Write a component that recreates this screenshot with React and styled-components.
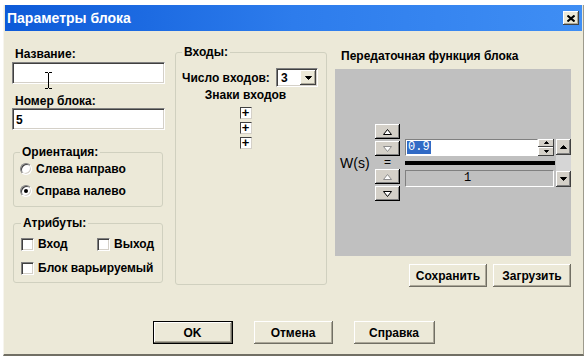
import React from "react";
import styled, { createGlobalStyle, css } from "styled-components";

const GlobalStyle = createGlobalStyle`
  html, body {
    margin: 0;
    padding: 0;
    background: #fff;
  }
  body {
    font-family: "Liberation Sans", Arial, sans-serif;
    font-size: 12px;
    font-weight: bold;
    color: #000;
  }
`;

// окно диалога
const Window = styled.div`
  position: relative;
  margin: 5px 0 0 3px;
  width: 581px;
  height: 351px;
  box-sizing: border-box;
  background: #ece9d8;
  border-left: 1px solid #f7f5ee;
  border-right: 1px solid #9d9a8c;
  border-bottom: 2px solid #716f64;
  display: flex;
  flex-direction: column;
`;

const TitleBar = styled.div`
  height: 26px;
  margin: 0 1px;
  display: flex;
  align-items: center;
  justify-content: space-between;
  background: linear-gradient(90deg, #0d5ad8 0%, #2d7cec 50%, #3f8ef4 100%);
`;

const TitleText = styled.span`
  padding-left: 2px;
  color: #fff;
  font-size: 14px;
  line-height: 26px;
`;

const CloseBtn = styled.div`
  width: 16px;
  height: 14px;
  margin-right: 3px;
  box-sizing: border-box;
  background: #ece9d8;
  box-shadow: inset -1px -1px #404040, inset 1px 1px #fff, inset -2px -2px #aca899;
  display: flex;
  align-items: center;
  justify-content: center;
`;

const MainRow = styled.div`
  display: flex;
  align-items: flex-start;
  padding: 14px 0 0 8px;
`;

const LeftCol = styled.div`
  width: 153px;
  margin-top: 2px;
  display: flex;
  flex-direction: column;
`;

const Label = styled.div`
  line-height: 14px;
  padding-left: 3px;
  margin-top: ${(p) => p.$mt || 0}px;
`;

const TextInput = styled.div`
  height: 22px;
  margin-top: ${(p) => p.$mt || 0}px;
  box-sizing: border-box;
  background: #fff;
  border: 1px solid;
  border-color: #808080 #fff #fff #808080;
  box-shadow: inset 1px 1px #404040, inset -1px -1px #d4d0c8;
  padding: 3px 0 0 3px;
  line-height: 16px;
`;

const Group = styled.fieldset`
  margin: ${(p) => p.$mt || 0}px 0 0 ${(p) => p.$ml || 0}px;
  padding: ${(p) => p.$pad || "0 6px"};
  width: ${(p) => p.$w}px;
  ${(p) => p.$h && css`height: ${p.$h}px;`}
  box-sizing: border-box;
  border: 1px solid #d0d0bf;
  border-radius: 3px;
  min-width: 0;
`;

const GroupTitle = styled.legend`
  padding: 0 2px;
  line-height: 14px;
  font-size: 12px;
`;

const OptionRow = styled.div`
  height: 16px;
  display: flex;
  align-items: center;
  margin-top: ${(p) => p.$mt || 0}px;
`;

const Option = styled.label`
  display: flex;
  align-items: center;
  gap: 4px;
  width: ${(p) => (p.$w ? `${p.$w}px` : "auto")};
`;

const Radio = styled.span`
  position: relative;
  width: 12px;
  height: 12px;
  box-sizing: border-box;
  border-radius: 50%;
  background: #fff;
  border: 1px solid;
  border-color: #808080 #fff #fff #808080;
  box-shadow: inset 1px 1px #404040, inset -1px -1px #d4d0c8;
  ${(p) =>
    p.$checked &&
    css`
      &::after {
        content: "";
        position: absolute;
        left: 3px;
        top: 3px;
        width: 4px;
        height: 4px;
        border-radius: 50%;
        background: #000;
      }
    `}
`;

const Check = styled.span`
  width: 13px;
  height: 13px;
  box-sizing: border-box;
  background: #fff;
  border: 1px solid;
  border-color: #808080 #fff #fff #808080;
  box-shadow: inset 1px 1px #404040, inset -1px -1px #d4d0c8;
`;

// средняя группа "Входы"
const InputsRow = styled.div`
  display: flex;
  align-items: center;
  justify-content: space-between;
  padding: 9px 2px 0 0;
`;

const Combo = styled.div`
  width: 42px;
  height: 19px;
  box-sizing: border-box;
  background: #fff;
  border: 1px solid;
  border-color: #808080 #fff #fff #808080;
  box-shadow: inset 1px 1px #404040, inset -1px -1px #d4d0c8;
  display: flex;
  align-items: center;
  justify-content: space-between;
  padding: 1px 1px 1px 4px;
`;

const DropBtn = styled.span`
  width: 16px;
  height: 15px;
  box-sizing: border-box;
  background: #ece9d8;
  box-shadow: inset -1px -1px #404040, inset 1px 1px #fff, inset -2px -2px #aca899;
  display: flex;
  align-items: center;
  justify-content: center;
`;

const Signs = styled.div`
  display: flex;
  flex-direction: column;
  align-items: center;
  padding-right: 11px;
`;

const SignsTitle = styled.div`
  line-height: 14px;
  margin-top: 1px;
`;

const SignList = styled.div`
  display: flex;
  flex-direction: column;
  gap: 3px;
  margin-top: 5px;
`;

const SignBox = styled.span`
  width: 12px;
  height: 12px;
  box-sizing: border-box;
  background: #fff;
  border: 1px solid;
  border-color: #404040 #d4d0c8 #d4d0c8 #404040;
  font-size: 13px;
  font-weight: 900;
  line-height: 10px;
  text-align: center;
`;

// правая часть
const RightCol = styled.div`
  width: 236px;
  margin: 4px 0 0 8px;
  display: flex;
  flex-direction: column;
`;

const SectionTitle = styled.div`
  line-height: 14px;
  padding-left: 6px;
`;

const Panel = styled.div`
  height: 187px;
  margin-top: 6px;
  background: #c0c0c0;
  display: flex;
  align-items: center;
  padding-left: 5px;
`;

const WLabel = styled.span`
  font-weight: normal;
  font-size: 14px;
  width: 30px;
  margin-right: 5px;
`;

const ArrowCol = styled.div`
  width: 25px;
  display: flex;
  flex-direction: column;
  align-items: stretch;
`;

const EqSign = styled.span`
  height: 13px;
  line-height: 13px;
  text-align: center;
  font-weight: normal;
  font-size: 12px;
`;

const ArrowBtn = styled.span`
  height: 15px;
  margin-bottom: ${(p) => p.$mb || 0}px;
  box-sizing: border-box;
  background: #d4d0c8;
  box-shadow: inset -1px -1px #000, inset 1px 1px #fff, inset -2px -2px #808080;
  display: flex;
  align-items: center;
  justify-content: center;
`;

const Fraction = styled.div`
  display: flex;
  align-items: stretch;
  margin-left: 5px;
`;

const FracBody = styled.div`
  width: 150px;
  display: flex;
  flex-direction: column;
`;

const NumRow = styled.div`
  height: 17px;
  display: flex;
`;

const NumField = styled.div`
  flex: 1;
  box-sizing: border-box;
  background: #fff;
  border: 1px solid;
  border-color: #808080 #fff #fff #808080;
  display: flex;
  align-items: center;
  padding-left: 1px;
  font-family: "Liberation Mono", "Courier New", monospace;
  font-weight: normal;
  font-size: 12px;
`;

const Selected = styled.span`
  background: #316ac5;
  color: #fff;
  line-height: 13px;
  padding: 0 1px;
`;

const Spinner = styled.div`
  width: 16px;
  margin-right: 1px;
  display: flex;
  flex-direction: column;
`;

const SpinBtn = styled.span`
  flex: 1;
  background: #d4d0c8;
  box-shadow: inset -1px -1px #404040, inset 1px 1px #fff;
  display: flex;
  align-items: center;
  justify-content: center;
`;

const FracBar = styled.div`
  height: 4px;
  margin: 5px 0 5px 0;
  background: #000;
`;

const DenField = styled.div`
  height: 17px;
  margin-right: 1px;
  box-sizing: border-box;
  border: 1px solid;
  border-color: #808080 #fff #fff #808080;
  text-align: center;
  padding-right: 24px;
  line-height: 15px;
  font-family: "Liberation Mono", "Courier New", monospace;
  font-weight: normal;
  font-size: 12px;
`;

const ScrollBar = styled.div`
  width: 15px;
  margin-left: 1px;
  display: flex;
  flex-direction: column;
  background: #d6d6d6;
`;

const ScrollBtn = styled.span`
  height: 16px;
  box-sizing: border-box;
  background: #d4d0c8;
  box-shadow: inset -1px -1px #404040, inset 1px 1px #fff, inset -2px -2px #808080;
  display: flex;
  align-items: center;
  justify-content: center;
`;

const ScrollTrack = styled.span`
  flex: 1;
`;

const ButtonRow = styled.div`
  display: flex;
  justify-content: ${(p) => p.$justify || "center"};
  gap: ${(p) => p.$gap || 0}px;
  margin-top: ${(p) => p.$mt || 0}px;
`;

const Button = styled.div`
  width: ${(p) => p.$w}px;
  height: 23px;
  box-sizing: border-box;
  background: #ece9d8;
  box-shadow: inset -1px -1px #716f64, inset 1px 1px #fff, inset -2px -2px #aca899;
  display: flex;
  align-items: center;
  justify-content: center;
  ${(p) =>
    p.$default &&
    css`
      border: 1px solid #000;
    `}
`;

const Cursor = styled.svg`
  position: absolute;
  left: 40px;
  top: 67px;
`;

const Tri = ({ dir = "up", outline, gray, w = 7, h = 4 }) => {
  const pts =
    dir === "up"
      ? `0.5,${h - 0.5} ${w / 2},0.5 ${w - 0.5},${h - 0.5}`
      : `0.5,0.5 ${w - 0.5},0.5 ${w / 2},${h - 0.5}`;
  const color = gray ? "#8c8c8c" : "#000";
  return (
    <svg width={w} height={h} viewBox={`0 0 ${w} ${h}`}>
      <polygon
        points={pts}
        fill={outline ? "#fff" : color}
        stroke={color}
        strokeWidth="1"
        strokeLinejoin="miter"
      />
    </svg>
  );
};

export default function App() {
  return (
    <>
      <GlobalStyle />
      <Window>
        <TitleBar>
          <TitleText>Параметры блока</TitleText>
          <CloseBtn>
            <svg width="8" height="7" viewBox="0 0 8 7">
              <path d="M0.5 0.5 L7.5 6.5 M7.5 0.5 L0.5 6.5" stroke="#000" strokeWidth="2" />
            </svg>
          </CloseBtn>
        </TitleBar>

        <MainRow>
          <LeftCol>
            <Label>Название:</Label>
            <TextInput $mt={1} />
            <Label $mt={10}>Номер блока:</Label>
            <TextInput>5</TextInput>

            <Group $w={150} $ml={1} $mt={15} $pad="2px 6px 7px">
              <GroupTitle>Ориентация:</GroupTitle>
              <OptionRow>
                <Option>
                  <Radio />
                  Слева направо
                </Option>
              </OptionRow>
              <OptionRow $mt={6}>
                <Option>
                  <Radio $checked />
                  Справа налево
                </Option>
              </OptionRow>
            </Group>

            <Group $w={150} $ml={1} $mt={9} $pad="6px 6px 6px 7px">
              <GroupTitle>Атрибуты:</GroupTitle>
              <OptionRow>
                <Option $w={76}>
                  <Check />
                  Вход
                </Option>
                <Option>
                  <Check />
                  Выход
                </Option>
              </OptionRow>
              <OptionRow $mt={8}>
                <Option>
                  <Check />
                  Блок варьируемый
                </Option>
              </OptionRow>
            </Group>
          </LeftCol>

          <Group $w={152} $h={240} $ml={10} $pad="0 6px">
            <GroupTitle>Входы:</GroupTitle>
            <InputsRow>
              <span>Число входов:</span>
              <Combo>
                3
                <DropBtn>
                  <Tri dir="down" w={7} h={4} />
                </DropBtn>
              </Combo>
            </InputsRow>
            <Signs>
              <SignsTitle>Знаки входов</SignsTitle>
              <SignList>
                <SignBox>+</SignBox>
                <SignBox>+</SignBox>
                <SignBox>+</SignBox>
              </SignList>
            </Signs>
          </Group>

          <RightCol>
            <SectionTitle>Передаточная функция блока</SectionTitle>
            <Panel>
              <WLabel>W(s)</WLabel>
              <ArrowCol>
                <ArrowBtn $mb={2}>
                  <Tri dir="up" outline w={9} h={6} />
                </ArrowBtn>
                <ArrowBtn>
                  <Tri dir="down" outline gray w={9} h={6} />
                </ArrowBtn>
                <EqSign>=</EqSign>
                <ArrowBtn $mb={2}>
                  <Tri dir="up" outline gray w={9} h={6} />
                </ArrowBtn>
                <ArrowBtn>
                  <Tri dir="down" outline w={9} h={6} />
                </ArrowBtn>
              </ArrowCol>
              <Fraction>
                <FracBody>
                  <NumRow>
                    <NumField>
                      <Selected>0.9</Selected>
                    </NumField>
                    <Spinner>
                      <SpinBtn>
                        <Tri dir="up" w={5} h={3} />
                      </SpinBtn>
                      <SpinBtn>
                        <Tri dir="down" w={5} h={3} />
                      </SpinBtn>
                    </Spinner>
                  </NumRow>
                  <FracBar />
                  <DenField>1</DenField>
                </FracBody>
                <ScrollBar>
                  <ScrollBtn>
                    <Tri dir="up" w={7} h={4} />
                  </ScrollBtn>
                  <ScrollTrack />
                  <ScrollBtn>
                    <Tri dir="down" w={7} h={4} />
                  </ScrollBtn>
                </ScrollBar>
              </Fraction>
            </Panel>
            <ButtonRow $justify="flex-end" $gap={6} $mt={8}>
              <Button $w={78}>Сохранить</Button>
              <Button $w={78}>Загрузить</Button>
            </ButtonRow>
          </RightCol>
        </MainRow>

        <ButtonRow $gap={21} $mt={34}>
          <Button $w={80} $default>
            OK
          </Button>
          <Button $w={79}>Отмена</Button>
          <Button $w={81}>Справка</Button>
        </ButtonRow>

        <Cursor width="9" height="17" viewBox="0 0 9 17">
          <path d="M1 0.5 H4 M5 0.5 H8 M4.5 1 V16 M1 16.5 H4 M5 16.5 H8" stroke="#000" strokeWidth="1" />
        </Cursor>
      </Window>
    </>
  );
}
